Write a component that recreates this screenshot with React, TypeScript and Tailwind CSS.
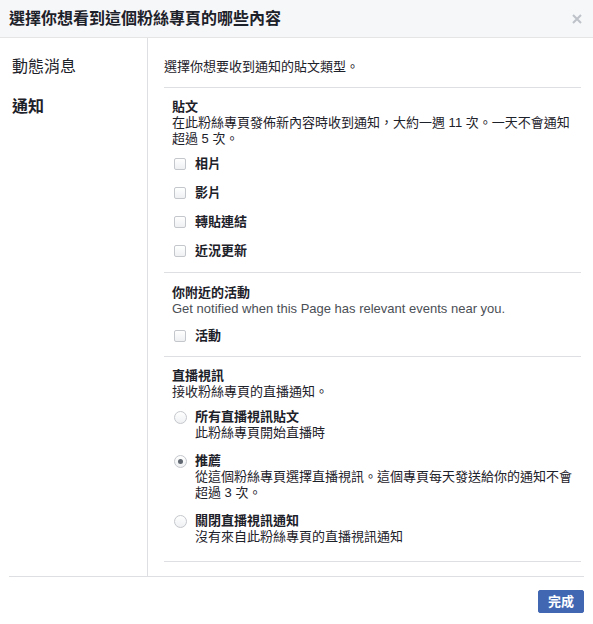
import React, { useState } from 'react'

const font = { fontFamily: '"Liberation Sans", "Noto Sans CJK TC", sans-serif' }

function Checkbox({ label }: { label: string }) {
  const [checked, setChecked] = useState(false)
  return (
    <label className="flex items-center h-4 cursor-pointer" onClick={() => setChecked(!checked)}>
      <span className="ml-[2px] w-3 h-3 rounded-[2px] border border-[#c4c7cc] bg-gradient-to-b from-white to-[#eef0f2] flex items-center justify-center">
        {checked && <span className="w-1.5 h-1.5 bg-[#4b4f56]" />}
      </span>
      <span className="ml-[9px] font-bold text-[#1d2129]">{label}</span>
    </label>
  )
}

function Radio({ label, sub, checked, onSelect }: { label: string; sub: string; checked: boolean; onSelect: () => void }) {
  return (
    <div className="flex cursor-pointer" onClick={onSelect}>
      <div className="h-4 flex items-center">
        <span className="ml-[2px] w-[13px] h-[13px] rounded-full border border-[#c4c7cc] bg-gradient-to-b from-white to-[#eef0f2] flex items-center justify-center">
          {checked && <span className="w-[5px] h-[5px] rounded-full bg-[#606770]" />}
        </span>
      </div>
      <div className="ml-2">
        <div className="font-bold text-[#1d2129]">{label}</div>
        <div className="text-[#1d2129]">{sub}</div>
      </div>
    </div>
  )
}

export default function App() {
  const [live, setLive] = useState('recommended')

  return (
    <div className="w-[593px] h-[624px] bg-white text-[#1d2129]" style={font}>
      {/* Header */}
      <div className="h-[38px] bg-[#f6f7f9] border-b border-[#e5e5e5] flex items-center justify-between pl-[9px] pr-[11px]">
        <h1 className="text-[16px] font-bold leading-5 text-[#1d2129]">選擇你想看到這個粉絲專頁的哪些內容</h1>
        <svg width="10" height="10" viewBox="0 0 10 10" className="mt-[1px]">
          <path d="M1 1 L9 9 M9 1 L1 9" stroke="#bec2c9" strokeWidth="2" />
        </svg>
      </div>

      {/* Body */}
      <div className="mx-[9px] h-[539px] border-b border-[#dddfe2] flex">
        <div className="w-[139px] border-r border-[#dddfe2] pl-[3px] pt-[19px] text-[16px]">
          <div className="h-5 leading-5">動態消息</div>
          <div className="h-5 leading-5 mt-5 font-bold">通知</div>
        </div>

        <div className="flex-1 pl-4 pr-[3px] text-[13px] leading-4">
          <div className="pt-[21px] pb-3 border-b border-[#dddfe2]">選擇你想要收到通知的貼文類型。</div>

          <div className="pl-2 pt-[11px] pb-[13px] border-b border-[#dddfe2]">
            <div className="font-bold">貼文</div>
            <div className="text-[#1d2129]">在此粉絲專頁發佈新內容時收到通知，大約一週 11 次。一天不會通知超過 5 次。</div>
            <div className="mt-[9px] flex flex-col gap-[13px]">
              <Checkbox label="相片" />
              <Checkbox label="影片" />
              <Checkbox label="轉貼連結" />
              <Checkbox label="近況更新" />
            </div>
          </div>

          <div className="pl-2 pt-3 pb-3 border-b border-[#dddfe2]">
            <div className="font-bold">你附近的活動</div>
            <div className="text-[#4b4f56]">Get notified when this Page has relevant events near you.</div>
            <div className="mt-[11px]">
              <Checkbox label="活動" />
            </div>
          </div>

          <div className="pl-2 pt-[11px] pb-4 border-b border-[#dddfe2]">
            <div className="font-bold">直播視訊</div>
            <div>接收粉絲專頁的直播通知。</div>
            <div className="mt-[9px] flex flex-col gap-[12px]">
              <Radio label="所有直播視訊貼文" sub="此粉絲專頁開始直播時" checked={live === 'all'} onSelect={() => setLive('all')} />
              <Radio label="推薦" sub="從這個粉絲專頁選擇直播視訊。這個專頁每天發送給你的通知不會超過 3 次。" checked={live === 'recommended'} onSelect={() => setLive('recommended')} />
              <Radio label="關閉直播視訊通知" sub="沒有來自此粉絲專頁的直播視訊通知" checked={live === 'off'} onSelect={() => setLive('off')} />
            </div>
          </div>
        </div>
      </div>

      {/* Footer */}
      <div className="mx-[9px] pt-[13px] flex justify-end">
        <button className="h-[23px] px-[9px] rounded-[2px] bg-[#4267b2] border border-[#4267b2] text-white text-[13px] font-bold leading-none">
          完成
        </button>
      </div>
    </div>
  )
}
